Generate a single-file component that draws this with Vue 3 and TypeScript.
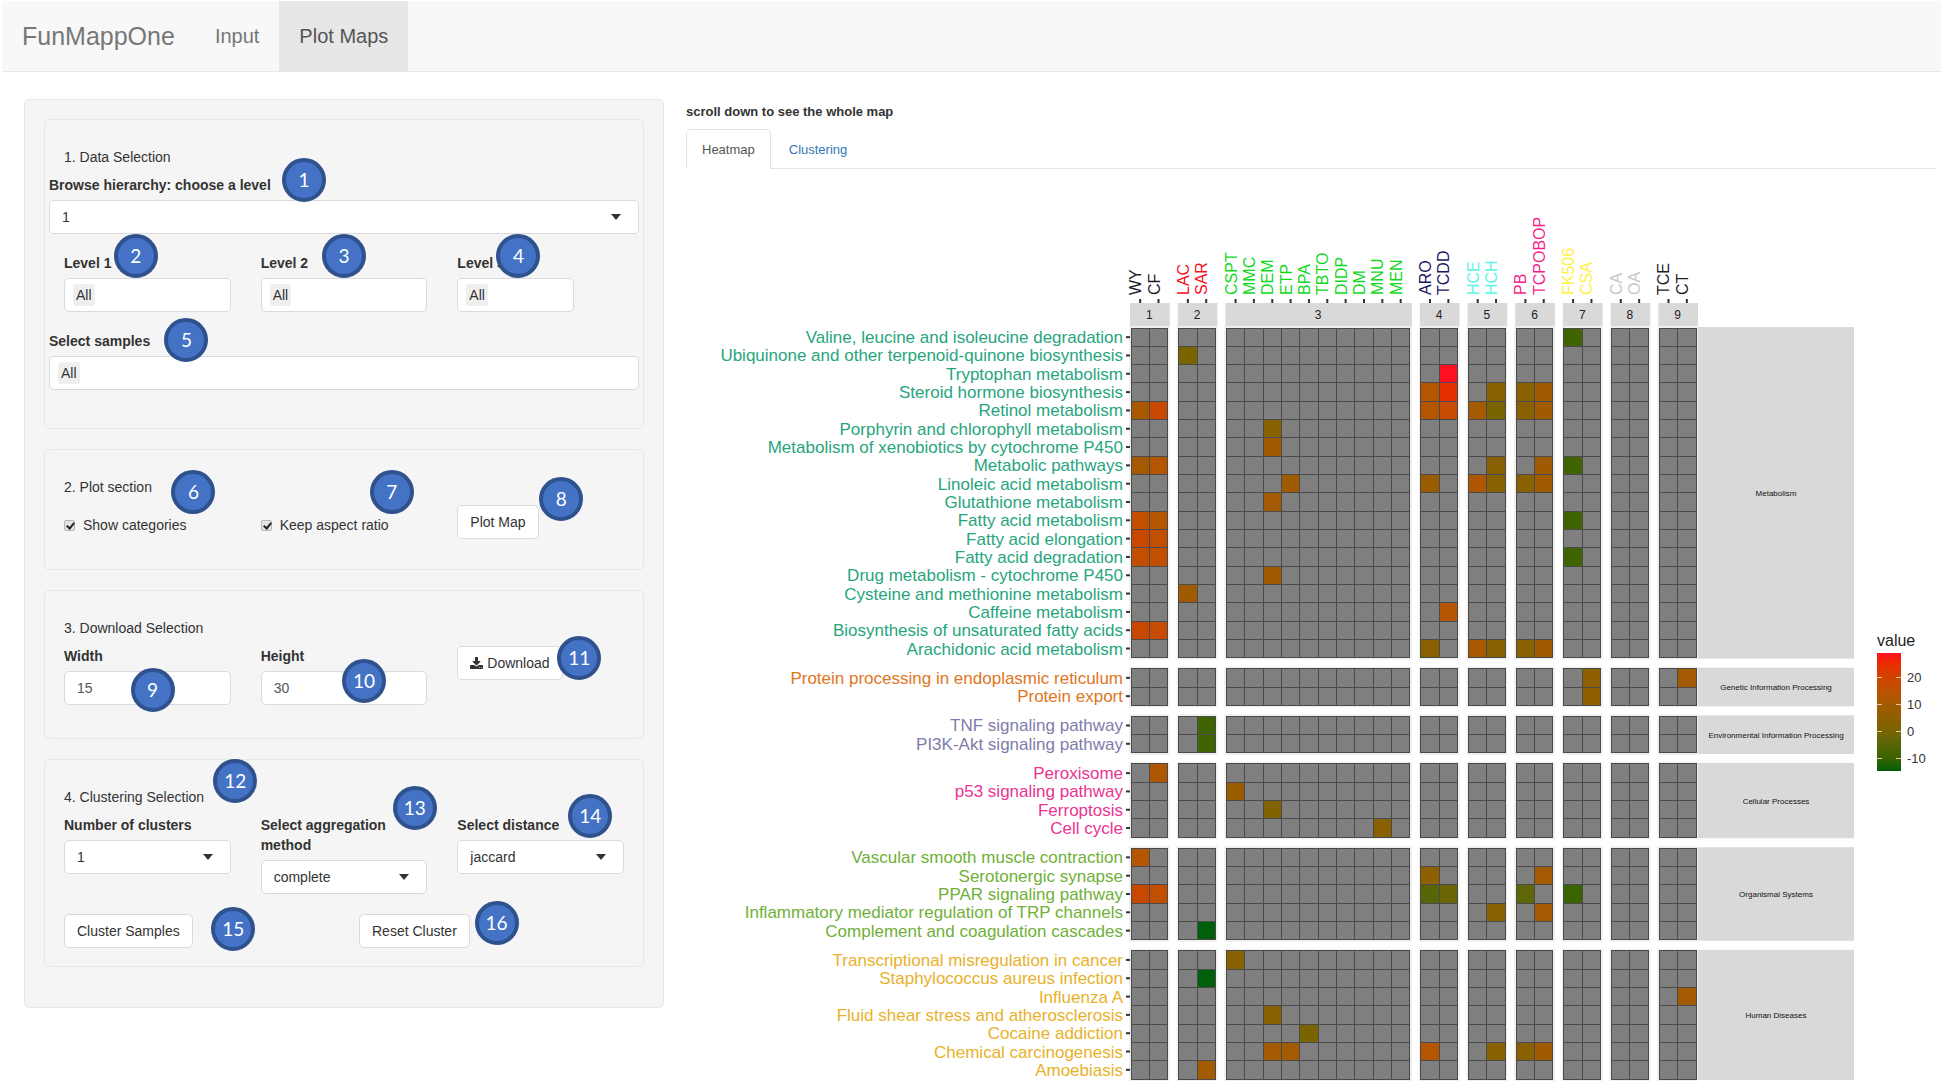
<script setup lang="ts">
import { ref } from 'vue'

interface SampleGroup { id: number; color: string; samples: string[] }
interface Pathway { name: string; values: Record<string, number> }
interface Category { name: string; color: string; pathways: Pathway[] }
interface Marker { n: number; x: number; y: number }

const level = ref('1')
const clusters = ref('1')
const aggregation = ref('complete')
const distance = ref('jaccard')
const showCategories = ref(true)
const keepAspect = ref(true)
const plotWidth = ref('15')
const plotHeight = ref('30')

// Numbered callouts, centred on points of the 640-unit-wide sidebar.
const SIDEBAR_UNITS = 640
const markers: Marker[] = [
  { n: 1, x: 280, y: 80 }, { n: 2, x: 111, y: 156 }, { n: 3, x: 320, y: 156 },
  { n: 4, x: 495, y: 156 }, { n: 5, x: 162, y: 240 }, { n: 6, x: 169, y: 392 },
  { n: 7, x: 368, y: 392 }, { n: 8, x: 538, y: 399 }, { n: 9, x: 128, y: 590 },
  { n: 10, x: 340, y: 581 }, { n: 11, x: 556, y: 558 }, { n: 12, x: 211, y: 681 },
  { n: 13, x: 391, y: 708 }, { n: 14, x: 567, y: 716 }, { n: 15, x: 209, y: 829 },
  { n: 16, x: 473, y: 823 },
]
const markerStyle = (m: Marker) => ({ left: `${(m.x / SIDEBAR_UNITS) * 100}%`, top: `${m.y}px` })

const groups: SampleGroup[] = [
  { id: 1, color: '#1c1c28', samples: ['WY', 'CF'] },
  { id: 2, color: '#f5101c', samples: ['LAC', 'SAR'] },
  { id: 3, color: '#12d81c', samples: ['CSPT', 'MMC', 'DEM', 'ETP', 'BPA', 'TBTO', 'DIDP', 'DM', 'MNU', 'MEN'] },
  { id: 4, color: '#1d1760', samples: ['ARO', 'TCDD'] },
  { id: 5, color: '#5ef5e4', samples: ['HCE', 'HCH'] },
  { id: 6, color: '#f51f8c', samples: ['PB', 'TCPOBOP'] },
  { id: 7, color: '#fff043', samples: ['FK506', 'CSA'] },
  { id: 8, color: '#c6c6c6', samples: ['CA', 'OA'] },
  { id: 9, color: '#1c1c28', samples: ['TCE', 'CT'] },
]

const categories: Category[] = [
  {
    name: 'Metabolism', color: '#27a57e', pathways: [
      { name: 'Valine, leucine and isoleucine degradation', values: { FK506: -9 } },
      { name: 'Ubiquinone and other terpenoid-quinone biosynthesis', values: { LAC: 0 } },
      { name: 'Tryptophan metabolism', values: { TCDD: 29 } },
      { name: 'Steroid hormone biosynthesis', values: { ARO: 13, TCDD: 24, HCH: 4, PB: 4, TCPOBOP: 9 } },
      { name: 'Retinol metabolism', values: { WY: 11, CF: 18, ARO: 13, TCDD: 17, HCE: 10, HCH: 0, PB: 4, TCPOBOP: 9 } },
      { name: 'Porphyrin and chlorophyll metabolism', values: { DEM: 4 } },
      { name: 'Metabolism of xenobiotics by cytochrome P450', values: { DEM: 9 } },
      { name: 'Metabolic pathways', values: { WY: 10, CF: 13, HCH: 4, TCPOBOP: 9, FK506: -9 } },
      { name: 'Linoleic acid metabolism', values: { ETP: 9, ARO: 8, HCE: 12, HCH: 3, PB: 4, TCPOBOP: 9 } },
      { name: 'Glutathione metabolism', values: { DEM: 10 } },
      { name: 'Fatty acid metabolism', values: { WY: 16, CF: 13, FK506: -9 } },
      { name: 'Fatty acid elongation', values: { WY: 18, CF: 16 } },
      { name: 'Fatty acid degradation', values: { WY: 16, CF: 16, FK506: -9 } },
      { name: 'Drug metabolism - cytochrome P450', values: { DEM: 9 } },
      { name: 'Cysteine and methionine metabolism', values: { LAC: 9 } },
      { name: 'Caffeine metabolism', values: { TCDD: 13 } },
      { name: 'Biosynthesis of unsaturated fatty acids', values: { WY: 18, CF: 17 } },
      { name: 'Arachidonic acid metabolism', values: { ARO: 4, HCE: 11, HCH: 3, PB: 4, TCPOBOP: 9 } },
    ],
  },
  {
    name: 'Genetic Information Processing', color: '#e07622', pathways: [
      { name: 'Protein processing in endoplasmic reticulum', values: { CSA: 5, CT: 10 } },
      { name: 'Protein export', values: { CSA: 5 } },
    ],
  },
  {
    name: 'Environmental Information Processing', color: '#7f7cab', pathways: [
      { name: 'TNF signaling pathway', values: { SAR: -9 } },
      { name: 'PI3K-Akt signaling pathway', values: { SAR: -9 } },
    ],
  },
  {
    name: 'Cellular Processes', color: '#ea3492', pathways: [
      { name: 'Peroxisome', values: { CF: 12 } },
      { name: 'p53 signaling pathway', values: { CSPT: 8 } },
      { name: 'Ferroptosis', values: { DEM: 1 } },
      { name: 'Cell cycle', values: { MNU: 4 } },
    ],
  },
  {
    name: 'Organismal Systems', color: '#70b038', pathways: [
      { name: 'Vascular smooth muscle contraction', values: { WY: 13 } },
      { name: 'Serotonergic synapse', values: { ARO: 5, TCPOBOP: 10 } },
      { name: 'PPAR signaling pathway', values: { WY: 18, CF: 16, ARO: -5, TCDD: -2, PB: -4, FK506: -10 } },
      { name: 'Inflammatory mediator regulation of TRP channels', values: { HCH: 3, TCPOBOP: 10 } },
      { name: 'Complement and coagulation cascades', values: { SAR: -15 } },
    ],
  },
  {
    name: 'Human Diseases', color: '#e8b12a', pathways: [
      { name: 'Transcriptional misregulation in cancer', values: { CSPT: 3 } },
      { name: 'Staphylococcus aureus infection', values: { SAR: -15 } },
      { name: 'Influenza A', values: { CT: 10 } },
      { name: 'Fluid shear stress and atherosclerosis', values: { DEM: 3 } },
      { name: 'Cocaine addiction', values: { BPA: 0 } },
      { name: 'Chemical carcinogenesis', values: { DEM: 10, ETP: 10, ARO: 13, HCH: 4, PB: 4, TCPOBOP: 9 } },
      { name: 'Amoebiasis', values: { SAR: 10 } },
    ],
  },
]

// Colour scale: [value, red, green, blue]
const stops: number[][] = [
  [-15, 0, 95, 10], [-10, 58, 100, 0], [-3, 100, 102, 8], [0, 122, 100, 0], [5, 142, 96, 0],
  [10, 164, 90, 0], [15, 190, 82, 0], [20, 208, 66, 0], [25, 236, 44, 0], [29, 255, 16, 32],
]
function colorFor(v: number): string {
  const i = Math.max(1, stops.findIndex((s) => v <= s[0]))
  const a = stops[i - 1]
  const b = stops[i]
  const t = (v - a[0]) / (b[0] - a[0])
  const mix = (k: number) => Math.round(a[k] + (b[k] - a[k]) * t)
  return `rgb(${mix(1)},${mix(2)},${mix(3)})`
}

// Plot geometry in chart units
const plot = { left: 445, right: 1010, top: 128, bottom: 879, gap: 11 }
const colCount = groups.reduce((n, g) => n + g.samples.length, 0)
const rowCount = categories.reduce((n, c) => n + c.pathways.length, 0)
const cw = (plot.right - plot.left - plot.gap * (groups.length - 1)) / colCount
const rh = (plot.bottom - plot.top - plot.gap * (categories.length - 1)) / rowCount

let gx = plot.left
const columns = groups.map((g) => {
  const x = gx
  const w = cw * g.samples.length
  gx += w + plot.gap
  return { ...g, x, w, cols: g.samples.map((name, i) => ({ name, x: x + i * cw })) }
})
let gy = plot.top
const bands = categories.map((c) => {
  const y = gy
  const h = rh * c.pathways.length
  gy += h + plot.gap
  return { ...c, y, h, rows: c.pathways.map((p, i) => ({ ...p, y: y + i * rh })) }
})

const legend = { x: 1191, y: 453, w: 24, h: 118 }
const legendTicks = [
  { label: '20', y: 477 }, { label: '10', y: 504 }, { label: '0', y: 531 }, { label: '-10', y: 558 },
]
const legendStops = [...stops].reverse().map((s) => ({
  offset: `${Math.round(((29 - s[0]) / 44) * 100)}%`,
  color: colorFor(s[0]),
}))
</script>

<template>
  <div class="page">
    <nav class="navbar">
      <a class="brand" href="#">FunMappOne</a>
      <a class="nav-link" href="#">Input</a>
      <a class="nav-link active" href="#">Plot Maps</a>
    </nav>

    <div class="columns">
      <aside class="sidebar">
        <section class="well data">
          <h2 class="title">1. Data Selection</h2>
          <div class="field">
            <label for="level">Browse hierarchy: choose a level</label>
            <div class="picker">
              <select id="level" v-model="level"><option>1</option><option>2</option><option>3</option></select>
            </div>
          </div>
          <div class="thirds levels">
            <div class="field">
              <label for="l1">Level 1</label>
              <div class="tokens"><span class="token">All</span><input id="l1" type="text" /></div>
            </div>
            <div class="field">
              <label for="l2">Level 2</label>
              <div class="tokens"><span class="token">All</span><input id="l2" type="text" /></div>
            </div>
            <div class="field short">
              <label for="l3">Level 3</label>
              <div class="tokens"><span class="token">All</span><input id="l3" type="text" /></div>
            </div>
          </div>
          <div class="field">
            <label for="samples">Select samples</label>
            <div class="tokens"><span class="token">All</span><input id="samples" type="text" /></div>
          </div>
        </section>

        <section class="well plotting">
          <h2 class="title">2. Plot section</h2>
          <div class="thirds">
            <div><label class="check"><input v-model="showCategories" type="checkbox" />Show categories</label></div>
            <div><label class="check"><input v-model="keepAspect" type="checkbox" />Keep aspect ratio</label></div>
            <div><button type="button" class="btn">Plot Map</button></div>
          </div>
        </section>

        <section class="well download">
          <h2 class="title">3. Download Selection</h2>
          <div class="thirds">
            <div class="field">
              <label for="w">Width</label>
              <input id="w" v-model="plotWidth" class="text" type="text" inputmode="numeric" />
            </div>
            <div class="field">
              <label for="h">Height</label>
              <input id="h" v-model="plotHeight" class="text" type="text" inputmode="numeric" />
            </div>
            <div>
              <button type="button" class="btn">
                <svg class="icon" viewBox="0 0 1664 1536" aria-hidden="true">
                  <path d="M1280 1344q0-26-19-45t-45-19-45 19-19 45 19 45 45 19 45-19 19-45zm256 0q0-26-19-45t-45-19-45 19-19 45 19 45 45 19 45-19 19-45zm128-224v320q0 40-28 68t-68 28h-1472q-40 0-68-28t-28-68v-320q0-40 28-68t68-28h465l135 136q58 56 136 56t136-56l136-136h464q40 0 68 28t28 68zm-325-569q17 41-14 70l-448 448q-18 19-45 19t-45-19l-448-448q-31-29-14-70 17-39 59-39h256v-448q0-26 19-45t45-19h256q26 0 45 19t19 45v448h256q42 0 59 39z" />
                </svg>Download
              </button>
            </div>
          </div>
        </section>

        <section class="well clustering">
          <h2 class="title">4. Clustering Selection</h2>
          <div class="thirds">
            <div class="field">
              <label for="nclust">Number of clusters</label>
              <div class="picker">
                <select id="nclust" v-model="clusters"><option>1</option><option>2</option></select>
              </div>
            </div>
            <div class="field">
              <label for="agg">Select aggregation method</label>
              <div class="picker">
                <select id="agg" v-model="aggregation"><option>complete</option><option>single</option></select>
              </div>
            </div>
            <div class="field">
              <label for="dist">Select distance</label>
              <div class="picker">
                <select id="dist" v-model="distance"><option>jaccard</option><option>euclidean</option></select>
              </div>
            </div>
          </div>
          <div class="halves">
            <div><button type="button" class="btn">Cluster Samples</button></div>
            <div><button type="button" class="btn">Reset Cluster</button></div>
          </div>
        </section>

        <span v-for="m in markers" :key="m.n" class="marker" :style="markerStyle(m)">{{ m.n }}</span>
      </aside>

      <main class="main">
        <p class="hint">scroll down to see the whole map</p>
        <div class="tabs">
          <a class="tab current" href="#">Heatmap</a>
          <a class="tab" href="#">Clustering</a>
        </div>

        <svg class="chart" viewBox="0 0 1250 882" role="img" aria-label="Pathway heatmap">
          <defs>
            <linearGradient id="scale" x1="0" y1="0" x2="0" y2="1">
              <stop v-for="s in legendStops" :key="s.offset" :offset="s.offset" :stop-color="s.color" />
            </linearGradient>
          </defs>

          <g v-for="g in columns" :key="g.id">
            <rect class="strip" :x="g.x - 1" y="103" :width="g.w + 3" height="24" />
            <text class="strip-num" :x="g.x + g.w / 2" y="119">{{ g.id }}</text>
            <g v-for="c in g.cols" :key="c.name">
              <text class="sample" :fill="g.color" :transform="`translate(${c.x + cw / 2 + 1} 95) rotate(-90)`">{{ c.name }}</text>
              <rect class="tick" :x="c.x + cw / 2 - 1" y="99" width="2" height="4" />
            </g>
          </g>

          <g v-for="b in bands" :key="b.name">
            <rect class="strip" x="1011" :y="b.y - 1" width="157" :height="b.h + 2" />
            <text class="strip-name" x="1090" :y="b.y + b.h / 2 + 3">{{ b.name }}</text>
            <rect v-for="g in columns" :key="g.id" class="panel" :x="g.x - 2" :y="b.y - 2" :width="g.w + 4" :height="b.h + 4" />
            <g v-for="r in b.rows" :key="r.name">
              <text class="pathway" x="437" :y="r.y + rh / 2 + 6" :fill="b.color">{{ r.name }}</text>
              <rect class="tick" x="440" :y="r.y + rh / 2 - 1" width="4" height="2" />
              <template v-for="g in columns" :key="g.id">
                <rect
                  v-for="c in g.cols" :key="c.name" class="cell" :x="c.x" :y="r.y" :width="cw" :height="rh"
                  :fill="c.name in r.values ? colorFor(r.values[c.name]) : '#7f7f7f'"
                />
              </template>
            </g>
          </g>

          <text class="legend-title" :x="legend.x" y="446">value</text>
          <rect :x="legend.x" :y="legend.y" :width="legend.w" :height="legend.h" fill="url(#scale)" />
          <g v-for="t in legendTicks" :key="t.label">
            <rect class="legend-tick" :x="legend.x" :y="t.y" width="5" height="1" />
            <rect class="legend-tick" :x="legend.x + legend.w - 5" :y="t.y" width="5" height="1" />
            <text class="legend-label" x="1221" :y="t.y + 5">{{ t.label }}</text>
          </g>
        </svg>
      </main>
    </div>
  </div>
</template>

<style>
body {
  margin: 0;
  background: #fff;
}
</style>

<style scoped>
.page,
.page * {
  box-sizing: border-box;
}
.page {
  font-family: "Liberation Sans", Arial, sans-serif;
  font-size: 14px;
  line-height: 20px;
  color: #333;
}
a {
  text-decoration: none;
}
.navbar {
  display: flex;
  margin: 1px 2px 0;
  height: 71px;
  background: #f8f8f8;
  border-bottom: 1px solid #e7e7e7;
}
.brand,
.nav-link {
  display: flex;
  align-items: center;
  padding: 0 20px;
  font-size: 20px;
  color: #777;
}
.brand {
  font-size: 25px;
}
.nav-link.active {
  color: #555;
  background: #e7e7e7;
}
.columns {
  display: grid;
  grid-template-columns: minmax(0, 640fr) minmax(0, 1250fr);
  gap: 22px;
  align-items: start;
  padding: 27px 7px 0 24px;
}
.sidebar {
  position: relative;
  padding: 19px 19px 20px;
  background: #f5f5f5;
  border: 1px solid #e6e8e8;
  border-radius: 5px;
}
.well {
  margin-bottom: 20px;
  padding: 27px 4px 38px;
  border: 1px solid #e6e8e8;
  border-radius: 5px;
}
.plotting {
  padding-bottom: 30px;
}
.download {
  padding-bottom: 33px;
}
.clustering {
  padding-bottom: 18px;
}
.title {
  margin: 0 15px 8px;
  font-size: 14px;
  font-weight: 400;
  line-height: 20px;
}
.field {
  display: flex;
  flex-direction: column;
  gap: 5px;
}
.field label {
  font-weight: 700;
}
.thirds,
.halves {
  display: grid;
  grid-template-columns: repeat(3, minmax(0, 1fr));
  align-items: start;
}
.halves {
  grid-template-columns: repeat(2, minmax(0, 1fr));
  margin-top: 20px;
}
.thirds > *,
.halves > * {
  padding: 0 15px;
}
.levels {
  margin: 19px 0;
}
.short .tokens {
  width: 70%;
}
.picker {
  position: relative;
}
.picker::after {
  content: "";
  position: absolute;
  right: 18px;
  top: 14px;
  border: 5px solid transparent;
  border-top: 6px solid #333;
  border-bottom: 0;
  pointer-events: none;
}
select,
.text,
.tokens,
.btn {
  height: 34px;
  font: inherit;
  color: #333;
  background: #fff;
  border: 1px solid #d9dadd;
  border-radius: 5px;
}
select,
.text {
  display: block;
  width: 100%;
  padding: 0 12px;
  appearance: none;
}
.text {
  color: #555;
}
.tokens {
  display: flex;
  align-items: center;
  padding: 0 8px;
}
.token {
  padding: 1px 3px;
  background: #efefef;
  border-radius: 3px;
}
.tokens input {
  flex: 1;
  min-width: 0;
  border: 0;
  padding: 0;
  background: transparent;
  font: inherit;
}
.btn {
  display: inline-flex;
  align-items: center;
  gap: 4px;
  padding: 0 12px;
  white-space: nowrap;
}
.icon {
  width: 13px;
  height: 12px;
  fill: #333;
}
.check {
  display: flex;
  align-items: center;
  gap: 8px;
  margin-top: 10px;
  white-space: nowrap;
}
.check input {
  appearance: none;
  position: relative;
  width: 11px;
  height: 11px;
  margin: 0;
  background: #e4e4e4;
  border: 1px solid #b8b8b8;
  border-radius: 2px;
}
.check input:checked::after {
  content: "";
  position: absolute;
  left: 3px;
  top: 0;
  width: 3px;
  height: 6px;
  border: solid #222;
  border-width: 0 2px 2px 0;
  transform: rotate(40deg);
}
.marker {
  position: absolute;
  display: flex;
  align-items: center;
  justify-content: center;
  width: 44px;
  height: 44px;
  margin: -22px 0 0 -22px;
  border: 4px solid #2f528f;
  border-radius: 50%;
  background: #4472c4;
  color: #fff;
  font-family: Lato, sans-serif;
  font-size: 19px;
}
.hint {
  margin: 3px 0 7px;
  font-size: 13px;
  font-weight: 700;
}
.tabs {
  display: flex;
  gap: 2px;
  border-bottom: 1px solid #e2e3e8;
}
.tab {
  height: 39px;
  padding: 10px 15px;
  border: 1px solid transparent;
  border-bottom: 0;
  font-size: 13px;
  color: #337ab7;
}
.tab.current {
  height: 40px;
  margin-bottom: -1px;
  border-color: #e2e3e8;
  border-radius: 5px 5px 0 0;
  background: #fff;
  color: #555;
}
.chart {
  display: block;
  width: 100%;
  margin-top: 31px;
  font-family: "Liberation Sans", Arial, sans-serif;
}
.strip {
  fill: #d9d9d9;
}
.panel {
  fill: #efefef;
}
.cell {
  stroke: #4a4a4a;
  stroke-width: 1;
  shape-rendering: crispEdges;
}
.tick {
  fill: #333;
}
.strip-num {
  font-size: 12px;
  fill: #222;
  text-anchor: middle;
}
.strip-name {
  font-size: 8px;
  fill: #111;
  text-anchor: middle;
}
.sample {
  font-size: 16px;
}
.pathway {
  font-size: 17px;
  text-anchor: end;
}
.legend-title {
  font-size: 16px;
  fill: #222;
}
.legend-label {
  font-size: 13px;
  fill: #333;
}
.legend-tick {
  fill: #e8c9a0;
}
</style>
